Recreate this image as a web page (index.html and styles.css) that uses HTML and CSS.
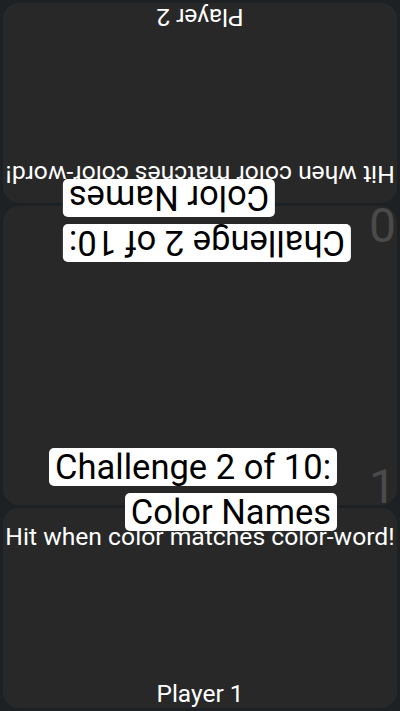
FILE: index.html
```html
<!DOCTYPE html>
<html>
<head>
<title>Color Duel</title>
<link rel="stylesheet" href="styles.css">
</head>
<body>
<div class="board">
  <div class="pad pad-top">
    <p class="hint">Hit when color matches color-word!</p>
    <p class="player">Player 2</p>
  </div>
  <div class="field">
    <div class="challenge challenge-top">
      <span class="label">Challenge 2 of 10:</span>
      <span class="label">Color Names</span>
    </div>
    <span class="score score-top">0</span>
    <span class="score score-bottom">1</span>
    <div class="challenge challenge-bottom">
      <span class="label">Challenge 2 of 10:</span>
      <span class="label">Color Names</span>
    </div>
  </div>
  <div class="pad pad-bottom">
    <p class="hint">Hit when color matches color-word!</p>
    <p class="player">Player 1</p>
  </div>
</div>
</body>
</html>
```

FILE: styles.css
```css
html, body {
  margin: 0;
  height: 100%;
}

body {
  background: #1e2124;
  font-family: Roboto, "Noto Sans", sans-serif;
  color: #ffffff;
}

.board {
  height: 100%;
  box-sizing: border-box;
  padding: 3px;
  display: flex;
  flex-direction: column;
  gap: 3px;
}

.pad {
  flex: 2;
  background: #282828;
  border-radius: 16px;
  display: flex;
  flex-direction: column;
  justify-content: space-between;
  align-items: center;
}

.pad-top {
  transform: rotate(180deg);
}

.hint {
  margin: 14px 0 0 0;
  font-size: 24.7px;
  white-space: nowrap;
}

.player {
  margin: 0;
  font-size: 24.5px;
}

.field {
  flex: 3;
  position: relative;
  background: #282828;
  border-radius: 16px;
  display: flex;
  flex-direction: column;
  justify-content: space-between;
}

.challenge {
  position: relative;
  z-index: 1;
  display: flex;
  flex-direction: column;
  align-items: flex-end;
  gap: 7px;
}

.challenge-top {
  transform: rotate(180deg);
  align-self: flex-start;
  margin-left: 60px;
  margin-top: -27px;
}

.challenge-bottom {
  align-self: flex-end;
  margin-right: 60px;
  margin-bottom: -26px;
}

.label {
  background: #ffffff;
  color: #000000;
  font-size: 34.5px;
  line-height: 38px;
  padding: 0 6px;
  border-radius: 5px;
  white-space: nowrap;
}

.score {
  position: absolute;
  right: 1px;
  font-size: 48px;
  line-height: 1;
  color: #4a4a4a;
}

.score-top {
  top: -6px;
  transform: rotate(180deg);
}

.score-bottom {
  bottom: -6px;
}
```
